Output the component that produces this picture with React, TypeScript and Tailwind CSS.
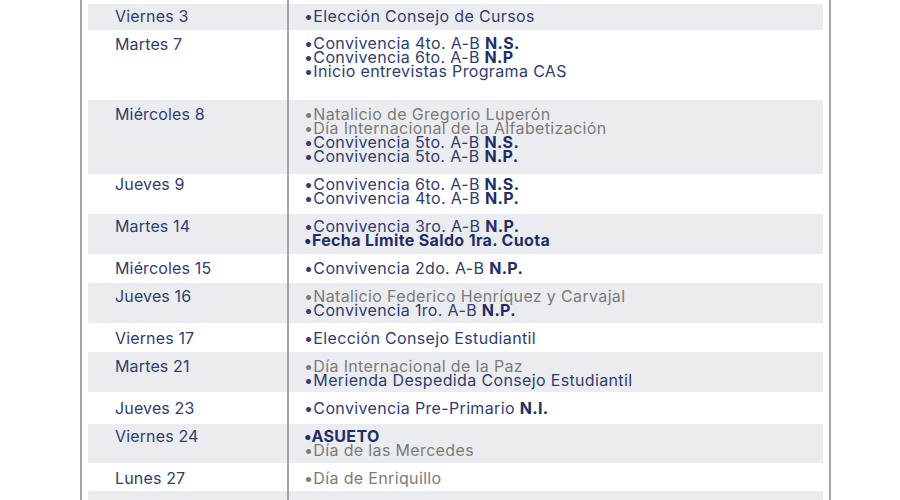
type Line = { text: string; tag?: string; tone?: "navy" | "gray" | "bold" };

type Row = { day: string; h: string; dayPt: string; evPt: string; gray: boolean; lines: Line[] };

const rows: Row[] = [
  {
    day: "Viernes 3",
    h: "h-[26px]",
    dayPt: "pt-[4px]",
    evPt: "pt-[5px]",
    gray: true,
    lines: [{ text: "Elección Consejo de Cursos" }],
  },
  {
    day: "Martes 7",
    h: "h-[70px]",
    dayPt: "pt-[6px]",
    evPt: "pt-[6px]",
    gray: false,
    lines: [
      { text: "Convivencia 4to. A-B ", tag: "N.S." },
      { text: "Convivencia 6to. A-B ", tag: "N.P" },
      { text: "Inicio entrevistas Programa CAS" },
    ],
  },
  {
    day: "Miércoles 8",
    h: "h-[74px]",
    dayPt: "pt-[6px]",
    evPt: "pt-[7px]",
    gray: true,
    lines: [
      { text: "Natalicio de Gregorio Luperón", tone: "gray" },
      { text: "Día Internacional de la Alfabetización", tone: "gray" },
      { text: "Convivencia 5to. A-B ", tag: "N.S." },
      { text: "Convivencia 5to. A-B ", tag: "N.P." },
    ],
  },
  {
    day: "Jueves 9",
    h: "h-[40px]",
    dayPt: "pt-[2px]",
    evPt: "pt-[3px]",
    gray: false,
    lines: [
      { text: "Convivencia 6to. A-B ", tag: "N.S." },
      { text: "Convivencia 4to. A-B ", tag: "N.P." },
    ],
  },
  {
    day: "Martes 14",
    h: "h-[40px]",
    dayPt: "pt-[4px]",
    evPt: "pt-[5px]",
    gray: true,
    lines: [
      { text: "Convivencia 3ro. A-B ", tag: "N.P." },
      { text: "Fecha Límite Saldo 1ra. Cuota", tone: "bold" },
    ],
  },
  {
    day: "Miércoles 15",
    h: "h-[29px]",
    dayPt: "pt-[6px]",
    evPt: "pt-[7px]",
    gray: false,
    lines: [{ text: "Convivencia 2do. A-B ", tag: "N.P." }],
  },
  {
    day: "Jueves 16",
    h: "h-[40px]",
    dayPt: "pt-[5px]",
    evPt: "pt-[6px]",
    gray: true,
    lines: [
      { text: "Natalicio Federico Henríquez y Carvajal", tone: "gray" },
      { text: "Convivencia 1ro. A-B ", tag: "N.P." },
    ],
  },
  {
    day: "Viernes 17",
    h: "h-[29px]",
    dayPt: "pt-[7px]",
    evPt: "pt-[8px]",
    gray: false,
    lines: [{ text: "Elección Consejo Estudiantil" }],
  },
  {
    day: "Martes 21",
    h: "h-[40px]",
    dayPt: "pt-[6px]",
    evPt: "pt-[7px]",
    gray: true,
    lines: [
      { text: "Día Internacional de la Paz", tone: "gray" },
      { text: "Merienda Despedida Consejo Estudiantil" },
    ],
  },
  {
    day: "Jueves 23",
    h: "h-[32px]",
    dayPt: "pt-[8px]",
    evPt: "pt-[9px]",
    gray: false,
    lines: [{ text: "Convivencia Pre-Primario ", tag: "N.I." }],
  },
  {
    day: "Viernes 24",
    h: "h-[39px]",
    dayPt: "pt-[4px]",
    evPt: "pt-[5px]",
    gray: true,
    lines: [
      { text: "ASUETO", tone: "bold" },
      { text: "Día de las Mercedes", tone: "gray" },
    ],
  },
  {
    day: "Lunes 27",
    h: "h-[28px]",
    dayPt: "pt-[7px]",
    evPt: "pt-[8px]",
    gray: false,
    lines: [{ text: "Día de Enriquillo", tone: "gray" }],
  },
  { day: "", h: "h-[40px]", dayPt: "pt-[6px]", evPt: "pt-[7px]", gray: true, lines: [] },
];

function EventLine({ line }: { line: Line }) {
  const color =
    line.tone === "gray"
      ? "text-[#7b7b7b]"
      : line.tone === "bold"
      ? "text-[#1f2f66] font-bold"
      : "text-[#2f3d70]";
  return (
    <div className={`whitespace-nowrap leading-[14px] ${color}`}>
      •{line.text}
      {line.tag && <span className="font-bold text-[#1f2f66]">{line.tag}</span>}
    </div>
  );
}

export default function App() {
  return (
    <div className="w-[900px] h-[500px] overflow-hidden bg-white font-['Inter',sans-serif]">
      <div className="ml-[80px] w-[751px] h-full border-x-2 border-[#a3a3a3] px-[6px]">
        {/* top spacer */}
        <div className="flex h-[4px]">
          <div className="w-[201px] border-r-2 border-[#a3a3a3]" />
        </div>

        {rows.map((row, i) => (
          <div key={i} className={`flex ${row.h} ${row.gray ? "bg-[#ebecef]" : "bg-white"}`}>
            {/* day column */}
            <div
              className={`w-[201px] shrink-0 border-r-2 border-[#a3a3a3] pl-[27px] ${row.dayPt} text-[16px] leading-[16px] tracking-[0.15px] text-[#2f3d70]`}
            >
              {row.day}
            </div>
            {/* events column */}
            <div className={`pl-[15px] ${row.evPt} text-[16px] tracking-[0.35px]`}>
              {row.lines.map((l, j) => (
                <EventLine key={j} line={l} />
              ))}
            </div>
          </div>
        ))}
      </div>
    </div>
  );
}
